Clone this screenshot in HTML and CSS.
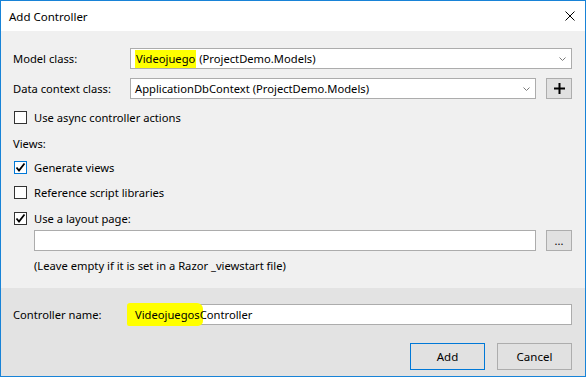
FILE: index.html
```html
<!DOCTYPE html>
<html lang="en">

<head>
	<meta charset="utf-8">
	<title>Add Controller</title>
	<link rel="stylesheet" href="styles.css">
</head>

<body>

	<div class="window">

		<div class="titlebar">
			<span class="title">Add Controller</span>
			<svg class="close" width="10" height="10" viewBox="0 0 10 10">
				<path d="M0.5 0.5 L9.5 9.5 M9.5 0.5 L0.5 9.5" stroke="#000" stroke-width="1" fill="none" />
			</svg>
		</div>

		<div class="main">

			<div class="row r-model">
				<span class="label">Model class:</span>
				<div class="combo wide">
					<span class="combo-text"><span class="hl">Videojuego</span> (ProjectDemo.Models)</span>
					<svg class="chevron" width="7" height="4" viewBox="0 0 7 4">
						<polyline points="0.5,0.5 3.5,3.5 6.5,0.5" stroke="#7a7a7a" stroke-width="1" fill="none" />
					</svg>
				</div>
			</div>

			<div class="row r-context">
				<span class="label">Data context class:</span>
				<div class="combo">
					<span class="combo-text">ApplicationDbContext (ProjectDemo.Models)</span>
					<svg class="chevron" width="7" height="4" viewBox="0 0 7 4">
						<polyline points="0.5,0.5 3.5,3.5 6.5,0.5" stroke="#7a7a7a" stroke-width="1" fill="none" />
					</svg>
				</div>
				<div class="small-btn">
					<svg width="11" height="11" viewBox="0 0 11 11">
						<path d="M5.5 0 V11 M0 5.5 H11" stroke="#000" stroke-width="2" fill="none" />
					</svg>
				</div>
			</div>

			<div class="row check r-async">
				<span class="box"></span>
				<span>Use async controller actions</span>
			</div>

			<div class="row r-views">Views:</div>

			<div class="row check r-gen">
				<span class="box focus">
					<svg width="11" height="11" viewBox="0 0 11 11">
						<polyline points="1.5,5.5 4,8.5 9.5,1.5" stroke="#000" stroke-width="1.8" fill="none" />
					</svg>
				</span>
				<span>Generate views</span>
			</div>

			<div class="row check r-ref">
				<span class="box"></span>
				<span>Reference script libraries</span>
			</div>

			<div class="row check r-layout">
				<span class="box">
					<svg width="11" height="11" viewBox="0 0 11 11">
						<polyline points="1.5,5.5 4,8.5 9.5,1.5" stroke="#000" stroke-width="1.8" fill="none" />
					</svg>
				</span>
				<span>Use a layout page:</span>
			</div>

			<div class="row r-path">
				<div class="textbox path"></div>
				<div class="small-btn dots">...</div>
			</div>

			<div class="row r-hint">(Leave empty if it is set in a Razor _viewstart file)</div>

		</div>

		<div class="footer">
			<div class="row r-name">
				<span class="label">Controller name:</span>
				<div class="textbox name">
					<span class="marker">Videojuegos</span>Controller
				</div>
			</div>

			<div class="buttons">
				<button class="btn default">Add</button>
				<button class="btn">Cancel</button>
			</div>
		</div>

	</div>

</body>

</html>
```

FILE: styles.css
```css
body {
	margin: 0;
	padding: 0;
	font-family: "Segoe UI", "Noto Sans", sans-serif;
	font-size: 11.2px;
	color: #000;
}

.window {
	width: 586px;
	height: 377px;
	box-sizing: border-box;
	border: 1px solid #1883d7;
	display: flex;
	flex-direction: column;
	background-color: #f0f0f0;
}

/* title bar */
.titlebar {
	height: 30px;
	background-color: #fff;
	display: flex;
	align-items: center;
	justify-content: space-between;
	padding: 0 10px 0 8px;
}

.title {
	font-size: 11.5px;
}

/* upper part */
.main {
	height: 257px;
	padding: 17px 13px 0 12px;
	box-sizing: border-box;
}

.row {
	display: flex;
	align-items: center;
}

.label {
	width: 117px;
	flex: none;
}

.combo,
.textbox {
	position: relative;
	height: 21px;
	box-sizing: border-box;
	border: 1px solid #acacac;
	background-color: #fff;
	display: flex;
	align-items: center;
	padding-left: 4px;
	white-space: nowrap;
}

.combo {
	width: 406px;
	justify-content: space-between;
	padding-right: 5px;
}

.combo.wide {
	width: 443px;
}

.hl {
	background-color: #ffff00;
	display: inline-block;
	padding: 1px 1px 2px 1px;
}

.small-btn {
	width: 26px;
	height: 21px;
	box-sizing: border-box;
	margin-left: 10px;
	border: 1px solid #adadad;
	background-color: #e1e1e1;
	display: flex;
	align-items: center;
	justify-content: center;
}

.dots {
	font-size: 11px;
	line-height: 14px;
}

.check .box {
	width: 13px;
	height: 13px;
	box-sizing: border-box;
	border: 1px solid #333;
	background-color: #fff;
	margin: 0 7px 0 1px;
	display: flex;
	align-items: center;
	justify-content: center;
}

.check .box.focus {
	border-color: #0078d7;
}

.r-model { height: 21px; }
.r-context { height: 21px; margin-top: 9px; }
.r-async { height: 19px; margin-top: 9px; }
.r-views { height: 18px; margin-top: 7px; }
.r-gen { height: 19px; margin-top: 6px; }
.r-ref { height: 19px; margin-top: 6px; }
.r-layout { height: 19px; margin-top: 7px; }
.r-path { height: 21px; margin-top: 2px; padding-left: 21px; }
.r-hint { height: 18px; margin-top: 5px; padding-left: 21px; }

.textbox.path {
	width: 503px;
}

/* lower part */
.footer {
	flex: 1;
	background-color: #e3e3e3;
	padding: 16px 13px 0 12px;
}

.r-name {
	height: 21px;
}

.textbox.name {
	width: 443px;
	z-index: 0;
}

.marker {
	position: relative;
}

.marker::before {
	content: "";
	position: absolute;
	top: -4px;
	bottom: -4px;
	left: -8px;
	right: -3px;
	background-color: #ffff00;
	border-radius: 3px 6px 5px 2px;
	z-index: -1;
}

.buttons {
	display: flex;
	justify-content: flex-end;
	gap: 12px;
	margin-top: 18px;
}

.btn {
	width: 75px;
	height: 27px;
	box-sizing: border-box;
	border: 1px solid #adadad;
	background-color: #e1e1e1;
	font-family: inherit;
	font-size: 11.5px;
	color: #000;
	padding: 0;
}

.btn.default {
	border-color: #0078d7;
}
```
